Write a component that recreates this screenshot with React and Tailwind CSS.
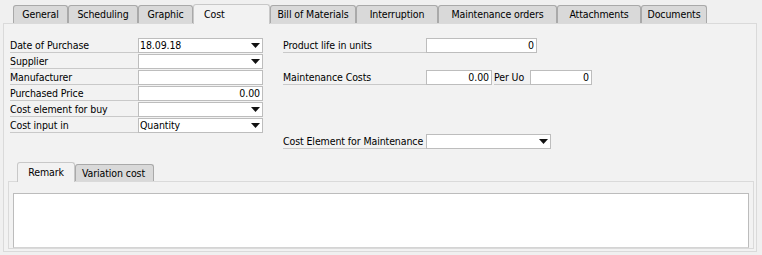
import React from "react";

const topTabs = [
  { label: "General", w: 55 },
  { label: "Scheduling", w: 70 },
  { label: "Graphic", w: 55 },
  { label: "Cost", w: 77, active: true },
  { label: "Bill of Materials", w: 86 },
  { label: "Interruption", w: 82 },
  { label: "Maintenance orders", w: 119 },
  { label: "Attachments", w: 84 },
  { label: "Documents", w: 66 },
];

function Arrow() {
  return (
    <svg width="9" height="5" viewBox="0 0 9 5" className="shrink-0">
      <polygon points="0,0 9,0 4.5,5" fill="#111" />
    </svg>
  );
}

function Label({ text, w }) {
  return (
    <div
      className="h-[15px] border-b border-[#c9c9c9] leading-[14px] whitespace-nowrap overflow-hidden"
      style={{ width: w }}
    >
      {text}
    </div>
  );
}

function Field({ w, value = "", right, combo }) {
  return (
    <div
      className="h-[15px] bg-white border border-[#bdbdbd] flex items-center pl-px pr-[2px] leading-[13px]"
      style={{ width: w }}
    >
      <span className={right ? "flex-1 text-right" : "flex-1"}>{value}</span>
      {combo && <Arrow />}
    </div>
  );
}

function Row({ children }) {
  return <div className="flex h-[16px]">{children}</div>;
}

export default function App() {
  return (
    <div
      className="w-[762px] h-[255px] bg-[#f0f0f0] text-[10.5px] tracking-[-0.1px] text-black pt-[4px] font-stretch-condensed"
      style={{ fontFamily: '"DejaVu Sans", "Liberation Sans", sans-serif' }}
    >
      {/* top tabs */}
      <div className="flex items-end h-[19px] pl-[13px] relative z-10">
        {topTabs.map((t) =>
          t.active ? (
            <div
              key={t.label}
              className="h-[20px] -mb-px bg-[#f2f2f2] border border-b-0 border-[#c8c8c8] rounded-t-[3px] pl-[10px] leading-[18px]"
              style={{ width: t.w }}
            >
              {t.label}
            </div>
          ) : (
            <div
              key={t.label}
              className="h-[18px] bg-[#d9d9d9] border border-b-0 border-[#a9a9a9] rounded-t-[3px] text-center leading-[17px] whitespace-nowrap"
              style={{ width: t.w }}
            >
              {t.label}
            </div>
          )
        )}
      </div>

      {/* main panel */}
      <div className="ml-[3px] w-[754px] h-[229px] bg-[#f2f2f2] border border-[#dadada]">
        <div className="h-[138px] pt-[14px] pl-[6px] flex gap-[20px]">
          {/* left column */}
          <div className="flex flex-col">
            <Row>
              <Label text="Date of Purchase" w={128} />
              <Field w={125} value="18.09.18" combo />
            </Row>
            <Row>
              <Label text="Supplier" w={128} />
              <Field w={125} combo />
            </Row>
            <Row>
              <Label text="Manufacturer" w={128} />
              <Field w={125} />
            </Row>
            <Row>
              <Label text="Purchased Price" w={128} />
              <Field w={125} value="0.00" right />
            </Row>
            <Row>
              <Label text="Cost element for buy" w={128} />
              <Field w={125} combo />
            </Row>
            <Row>
              <Label text="Cost input in" w={128} />
              <Field w={125} value="Quantity" combo />
            </Row>
          </div>

          {/* right column */}
          <div className="flex flex-col">
            <Row>
              <Label text="Product life in units" w={143} />
              <Field w={111} value="0" right />
            </Row>
            <Row />
            <Row>
              <Label text="Maintenance Costs" w={143} />
              <Field w={66} value="0.00" right />
              <div className="w-[2px]" />
              <Label text="Per Uo" w={36} />
              <Field w={62} value="0" right />
            </Row>
            <Row />
            <Row />
            <Row />
            <Row>
              <Label text="Cost Element for Maintenance" w={143} />
              <Field w={125} combo />
            </Row>
          </div>
        </div>

        {/* lower tabs */}
        <div className="ml-[4px]">
          <div className="flex items-end h-[19px] pl-[9px] relative z-10">
            <div className="w-[58px] h-[20px] -mb-px bg-[#f2f2f2] border border-b-0 border-[#c8c8c8] rounded-t-[3px] text-center leading-[18px]">
              Remark
            </div>
            <div className="w-[79px] h-[17px] bg-[#d9d9d9] border border-b-0 border-[#a9a9a9] rounded-t-[3px] pl-[6px] leading-[16px]">
              Variation cost
            </div>
          </div>
          <div className="w-[746px] h-[68px] border border-[#dadada] pt-[11px] pl-[4px]">
            <div className="w-[736px] h-[55px] bg-white border border-[#bcbcbc] border-b-[#d4d4d4]" />
          </div>
        </div>
      </div>
    </div>
  );
}
